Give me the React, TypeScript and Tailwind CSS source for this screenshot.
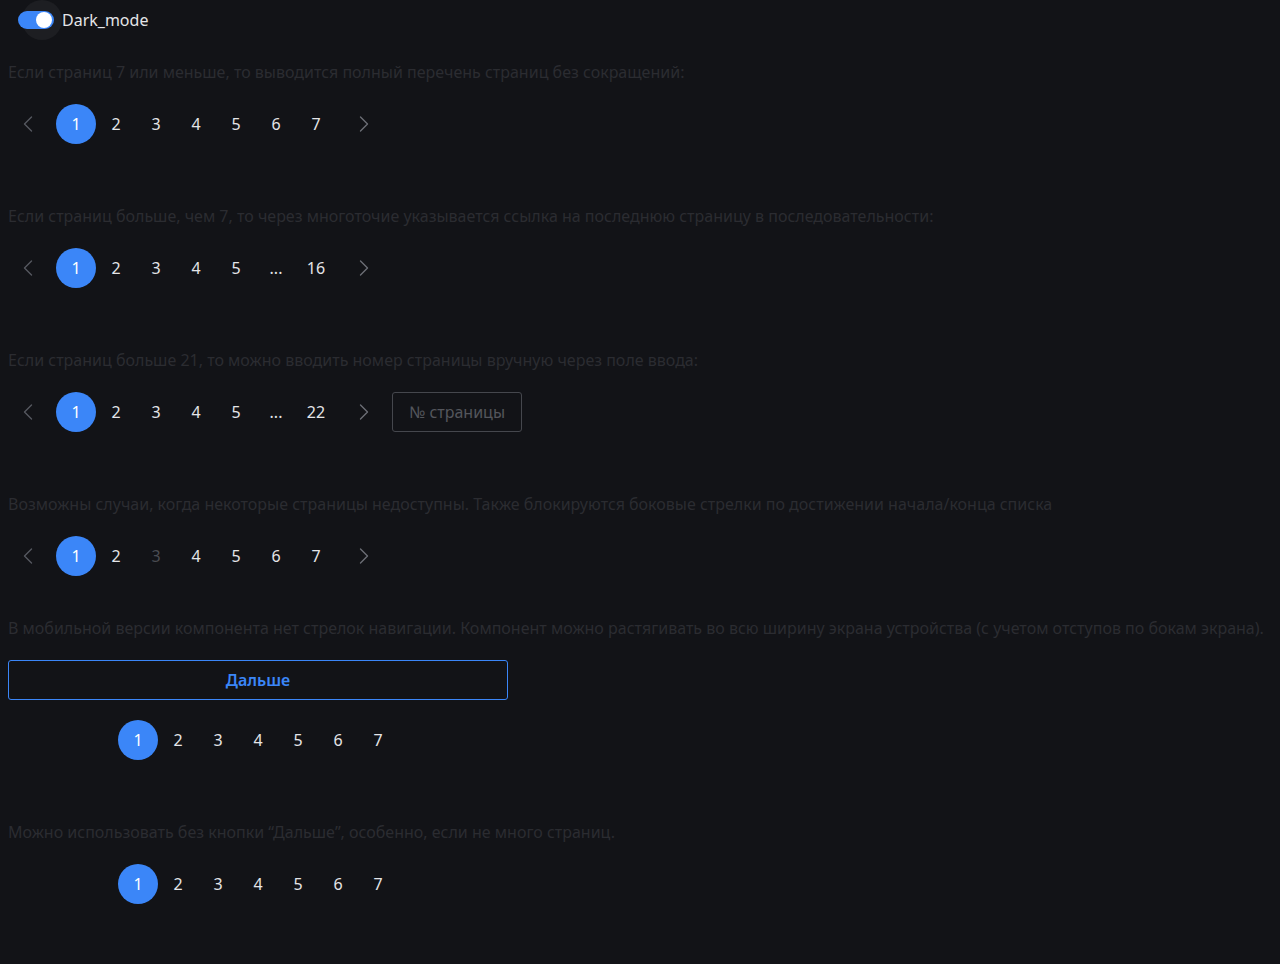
import { ChevronLeft, ChevronRight } from "lucide-react";

type Item = { label: string; active?: boolean; disabled?: boolean };

const font = { fontFamily: '"Noto Sans", "Open Sans", sans-serif' };

function pages(labels: string[], activeIdx = 0, disabled: number[] = []): Item[] {
  return labels.map((l, i) => ({ label: l, active: i === activeIdx, disabled: disabled.includes(i) }));
}

function PageItems({ items }: { items: Item[] }) {
  return (
    <div className="flex items-center">
      {items.map((it, i) => (
        <div
          key={i}
          className={`w-10 h-10 flex items-center justify-center rounded-full text-[16px] ${
            it.active ? "bg-[#3b86f8] text-white" : it.disabled ? "text-[#4a4c52]" : "text-[#e4e5e8]"
          }`}
        >
          {it.label}
        </div>
      ))}
    </div>
  );
}

function Pager({ items, withInput }: { items: Item[]; withInput?: boolean }) {
  return (
    <div className="flex items-center gap-2 h-10">
      <div className="w-10 h-10 flex items-center justify-center text-[#555860]">
        <ChevronLeft size={28} strokeWidth={1.2} />
      </div>
      <PageItems items={items} />
      <div className="w-10 h-10 flex items-center justify-center text-[#6b6e76]">
        <ChevronRight size={28} strokeWidth={1.2} />
      </div>
      {withInput && (
        <div className="w-[130px] h-10 border border-[#45474d] rounded-[3px] flex items-center justify-center text-[16px] text-[#54565c]">
          № страницы
        </div>
      )}
    </div>
  );
}

function Caption({ children }: { children: string }) {
  return <p className="text-[16px] leading-6 text-[#2b2c31] m-0">{children}</p>;
}

export default function App() {
  const seven = ["1", "2", "3", "4", "5", "6", "7"];
  return (
    <div className="min-h-[964px] bg-[#121317]" style={font}>
      <div className="h-10 flex items-center pl-[18px]">
        <div className="relative w-[36px] h-[18px]">
          <div className="absolute left-[4px] top-[-11px] w-10 h-10 rounded-full bg-[#1d1e22]" />
          <div className="absolute inset-0 rounded-full bg-[#3b86f8]" />
          <div className="absolute right-[2px] top-[1px] w-4 h-4 rounded-full bg-white" />
        </div>
        <span className="ml-2 text-[16px] text-[#e4e5e8]">Dark_mode</span>
      </div>
      <div className="px-2 pt-5">
        <Caption>Если страниц 7 или меньше, то выводится полный перечень страниц без сокращений:</Caption>
        <div className="mt-5">
          <Pager items={pages(seven)} />
        </div>

        <div className="mt-[60px]">
          <Caption>Если страниц больше, чем 7, то через многоточие указывается ссылка на последнюю страницу в последовательности:</Caption>
        </div>
        <div className="mt-5">
          <Pager items={pages(["1", "2", "3", "4", "5", "...", "16"])} />
        </div>

        <div className="mt-[60px]">
          <Caption>Если страниц больше 21, то можно вводить номер страницы вручную через поле ввода:</Caption>
        </div>
        <div className="mt-5">
          <Pager items={pages(["1", "2", "3", "4", "5", "...", "22"])} withInput />
        </div>

        <div className="mt-[60px]">
          <Caption>Возможны случаи, когда некоторые страницы недоступны. Также блокируются боковые стрелки по достижении начала/конца списка</Caption>
        </div>
        <div className="mt-5">
          <Pager items={pages(seven, 0, [2])} />
        </div>

        <div className="mt-10">
          <Caption>В мобильной версии компонента нет стрелок навигации. Компонент можно растягивать во всю ширину экрана устройства (с учетом отступов по бокам экрана).</Caption>
        </div>
        <div className="mt-5 w-[500px] flex flex-col gap-5">
          <button className="h-10 w-full border border-[#3b86f8] rounded-[3px] bg-transparent text-[#3b86f8] text-[16px] font-semibold">
            Дальше
          </button>
          <div className="flex justify-center">
            <PageItems items={pages(seven)} />
          </div>
        </div>

        <div className="mt-[60px]">
          <Caption>Можно использовать без кнопки “Дальше”, особенно, если не много страниц.</Caption>
        </div>
        <div className="mt-5 w-[500px] flex justify-center">
          <PageItems items={pages(seven)} />
        </div>
      </div>
    </div>
  );
}
